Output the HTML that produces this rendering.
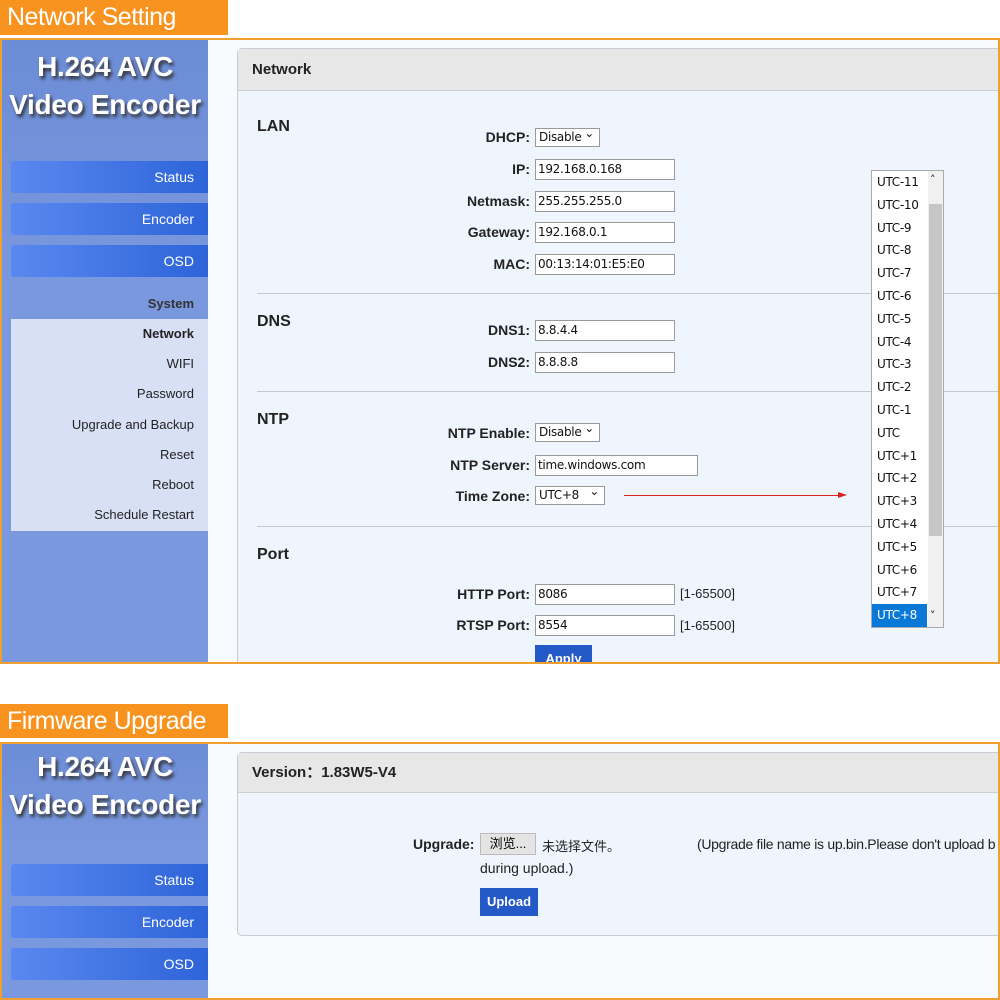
<!DOCTYPE html>
<html><head><meta charset="utf-8"><style>
*{margin:0;padding:0;box-sizing:border-box}
body{width:1000px;height:1000px;background:#fff;position:relative;overflow:hidden;font-family:"Liberation Sans",Arial,sans-serif;}
.a{position:absolute}
.lbl{background:#f7931e;color:#fff;font-size:25px;padding-left:7px;line-height:34px;letter-spacing:-0.5px}
.frame{border:2px solid #f0a030;background:#f8fafd;overflow:hidden}
.side{background:linear-gradient(#6c8cd6,#7a98de 40%,#7a98de)}
.logo{color:#fff;font-family:"Liberation Sans",sans-serif;font-weight:bold;font-size:28px;text-align:center;text-shadow:2px 3px 3px #333;line-height:38px;white-space:nowrap;letter-spacing:-0.3px}
.btn{background:linear-gradient(90deg,#5a88f0,#2d64d8);color:#fff;font-size:14px;text-align:right;padding-right:14px;border-radius:3px 0 0 3px;line-height:32px;height:32px}
.sub{background:#d8e0f6;}
.sub div{font-size:13px;color:#222;text-align:right;padding-right:14px;height:30.2px;line-height:30px}
.panel{border:1px solid #c8ccd4;border-radius:5px;background:#eef5fd}
.ph{background:#e7e7e7;border-bottom:1px solid #d0d0d0;height:42px;line-height:42px;padding-left:14px;font-weight:bold;font-size:15px;color:#222}
.h{font-weight:bold;font-size:16px;color:#222}
.l{font-weight:bold;font-size:14px;color:#222;text-align:right;width:200px}
.in{background:#fff;border:1px solid #999;height:21px;font-size:12px;line-height:19px;padding-left:2px;color:#111;font-family:"DejaVu Sans",sans-serif;letter-spacing:-0.3px}
.sel{background:#fff;border:1px solid #999;height:19px;font-size:12px;line-height:17px;padding-left:3px;color:#111;font-family:"DejaVu Sans",sans-serif;letter-spacing:-0.3px}
.sel:after{content:"⌄";position:absolute;right:5px;top:-4px;font-size:12px}
.hr{height:1px;background:#c4c8cc}
.dd{background:#fff;border:1px solid #aaa}
.dd div{height:22.8px;line-height:22.8px;font-size:12px;padding-left:5px;width:55px;color:#111;font-family:"DejaVu Sans",sans-serif;letter-spacing:-0.3px}
</style></head><body>

<div class="a lbl" style="left:0;top:0;width:228px;height:35px">Network Setting</div>
<div class="a frame" style="left:0;top:38px;width:1000px;height:626px">
 <div class="a side" style="left:0;top:0;width:206px;height:622px"></div>
 <div class="a logo" style="left:0;top:8px;width:206px">H.264 AVC<br>Video Encoder</div>
 <div class="a btn" style="left:9px;top:121px;width:197px">Status</div>
 <div class="a btn" style="left:9px;top:163px;width:197px">Encoder</div>
 <div class="a btn" style="left:9px;top:205px;width:197px">OSD</div>
 <div class="a" style="left:9px;top:256px;width:183px;text-align:right;font-weight:bold;font-size:13px;color:#333">System</div>
 <div class="a sub" style="left:9px;top:279px;width:197px;height:212px">
  <div style="font-weight:bold">Network</div><div>WIFI</div><div>Password</div><div>Upgrade and Backup</div><div>Reset</div><div>Reboot</div><div>Schedule Restart</div>
 </div>
 <div class="a panel" style="left:235px;top:8px;width:780px;height:640px">
  <div class="ph">Network</div>
 </div>
 <div class="a h" style="left:255px;top:78px">LAN</div>
 <div class="a l" style="left:328px;top:89px">DHCP:</div><div class="a sel" style="left:533px;top:88px;width:65px">Disable</div>
 <div class="a l" style="left:328px;top:121px">IP:</div><div class="a in" style="left:533px;top:119px;width:140px">192.168.0.168</div>
 <div class="a l" style="left:328px;top:153px">Netmask:</div><div class="a in" style="left:533px;top:151px;width:140px">255.255.255.0</div>
 <div class="a l" style="left:328px;top:184px">Gateway:</div><div class="a in" style="left:533px;top:182px;width:140px">192.168.0.1</div>
 <div class="a l" style="left:328px;top:216px">MAC:</div><div class="a in" style="left:533px;top:214px;width:140px">00:13:14:01:E5:E0</div>
 <div class="a hr" style="left:255px;top:253px;width:745px"></div>
 <div class="a h" style="left:255px;top:273px">DNS</div>
 <div class="a l" style="left:328px;top:282px">DNS1:</div><div class="a in" style="left:533px;top:280px;width:140px">8.8.4.4</div>
 <div class="a l" style="left:328px;top:314px">DNS2:</div><div class="a in" style="left:533px;top:312px;width:140px">8.8.8.8</div>
 <div class="a hr" style="left:255px;top:351px;width:745px"></div>
 <div class="a h" style="left:255px;top:371px">NTP</div>
 <div class="a l" style="left:328px;top:385px">NTP Enable:</div><div class="a sel" style="left:533px;top:383px;width:65px">Disable</div>
 <div class="a l" style="left:328px;top:417px">NTP Server:</div><div class="a in" style="left:533px;top:415px;width:163px">time.windows.com</div>
 <div class="a l" style="left:328px;top:448px">Time Zone:</div><div class="a sel" style="left:533px;top:446px;width:70px">UTC+8</div>
 <div class="a" style="left:622px;top:455px;width:218px;height:1px;background:#d22"></div>
 <div class="a" style="left:836px;top:452px;width:0;height:0;border-left:9px solid #d22;border-top:3px solid transparent;border-bottom:3px solid transparent"></div>
 <div class="a hr" style="left:255px;top:486px;width:745px"></div>
 <div class="a h" style="left:255px;top:506px">Port</div>
 <div class="a l" style="left:328px;top:546px">HTTP Port:</div><div class="a in" style="left:533px;top:544px;width:140px">8086</div><div class="a" style="left:678px;top:546px;font-size:13px;color:#222">[1-65500]</div>
 <div class="a l" style="left:328px;top:577px">RTSP Port:</div><div class="a in" style="left:533px;top:575px;width:140px">8554</div><div class="a" style="left:678px;top:578px;font-size:13px;color:#222">[1-65500]</div>
 <div class="a" style="left:533px;top:605px;width:57px;height:30px;background:#2459c8;color:#fff;font-weight:bold;font-size:13px;text-align:center;line-height:28px">Apply</div>
 <div class="a dd" style="left:869px;top:130px;width:73px;height:458px">
  <div>UTC-11</div><div>UTC-10</div><div>UTC-9</div><div>UTC-8</div><div>UTC-7</div><div>UTC-6</div><div>UTC-5</div><div>UTC-4</div><div>UTC-3</div><div>UTC-2</div><div>UTC-1</div><div>UTC</div><div>UTC+1</div><div>UTC+2</div><div>UTC+3</div><div>UTC+4</div><div>UTC+5</div><div>UTC+6</div><div>UTC+7</div><div style="background:#0a78d7;color:#fff">UTC+8</div>
  <div class="a" style="left:56px;top:0;width:15px;height:456px;background:#f0f0f0"></div>
  <div class="a" style="left:57px;top:33px;width:13px;height:332px;background:#c6c6c6"></div>
  <div class="a" style="left:58px;top:2px;font-size:11px;padding:0;width:12px;height:14px;line-height:14px">˄</div>
  <div class="a" style="left:58px;top:438px;font-size:11px;padding:0;width:12px;height:14px;line-height:14px">˅</div>
 </div>
</div>

<div class="a lbl" style="left:0;top:704px;width:228px;height:34px">Firmware Upgrade</div>
<div class="a frame" style="left:0;top:742px;width:1000px;height:258px">
 <div class="a side" style="left:0;top:0;width:206px;height:256px"></div>
 <div class="a logo" style="left:0;top:4px;width:206px">H.264 AVC<br>Video Encoder</div>
 <div class="a btn" style="left:9px;top:120px;width:197px">Status</div>
 <div class="a btn" style="left:9px;top:162px;width:197px">Encoder</div>
 <div class="a btn" style="left:9px;top:204px;width:197px">OSD</div>
 <div class="a panel" style="left:235px;top:8px;width:780px;height:184px">
  <div class="ph" style="height:40px;line-height:40px">Version：1.83W5-V4</div>
 </div>
 <div class="a" style="left:411px;top:92px;font-weight:bold;font-size:14px;color:#222">Upgrade:</div>
 <div class="a" style="left:478px;top:89px;width:56px;height:22px;background:#e4e4e4;border:1px solid #bbb;font-size:13px;text-align:center;line-height:20px;font-family:'Liberation Sans','Noto Sans CJK SC',sans-serif">浏览...</div>
 <div class="a" style="left:540px;top:92px;font-size:13px;font-family:'Liberation Sans','Noto Sans CJK SC',sans-serif;color:#222">未选择文件。</div>
 <div class="a" style="left:695px;top:92px;font-size:14px;color:#222;white-space:nowrap;letter-spacing:-0.3px">(Upgrade file name is up.bin.Please don't upload b</div>
 <div class="a" style="left:478px;top:116px;font-size:14px;color:#222">during upload.)</div>
 <div class="a" style="left:478px;top:144px;width:58px;height:28px;background:#2459c8;color:#fff;font-weight:bold;font-size:13px;text-align:center;line-height:28px">Upload</div>
</div>
</body></html>
